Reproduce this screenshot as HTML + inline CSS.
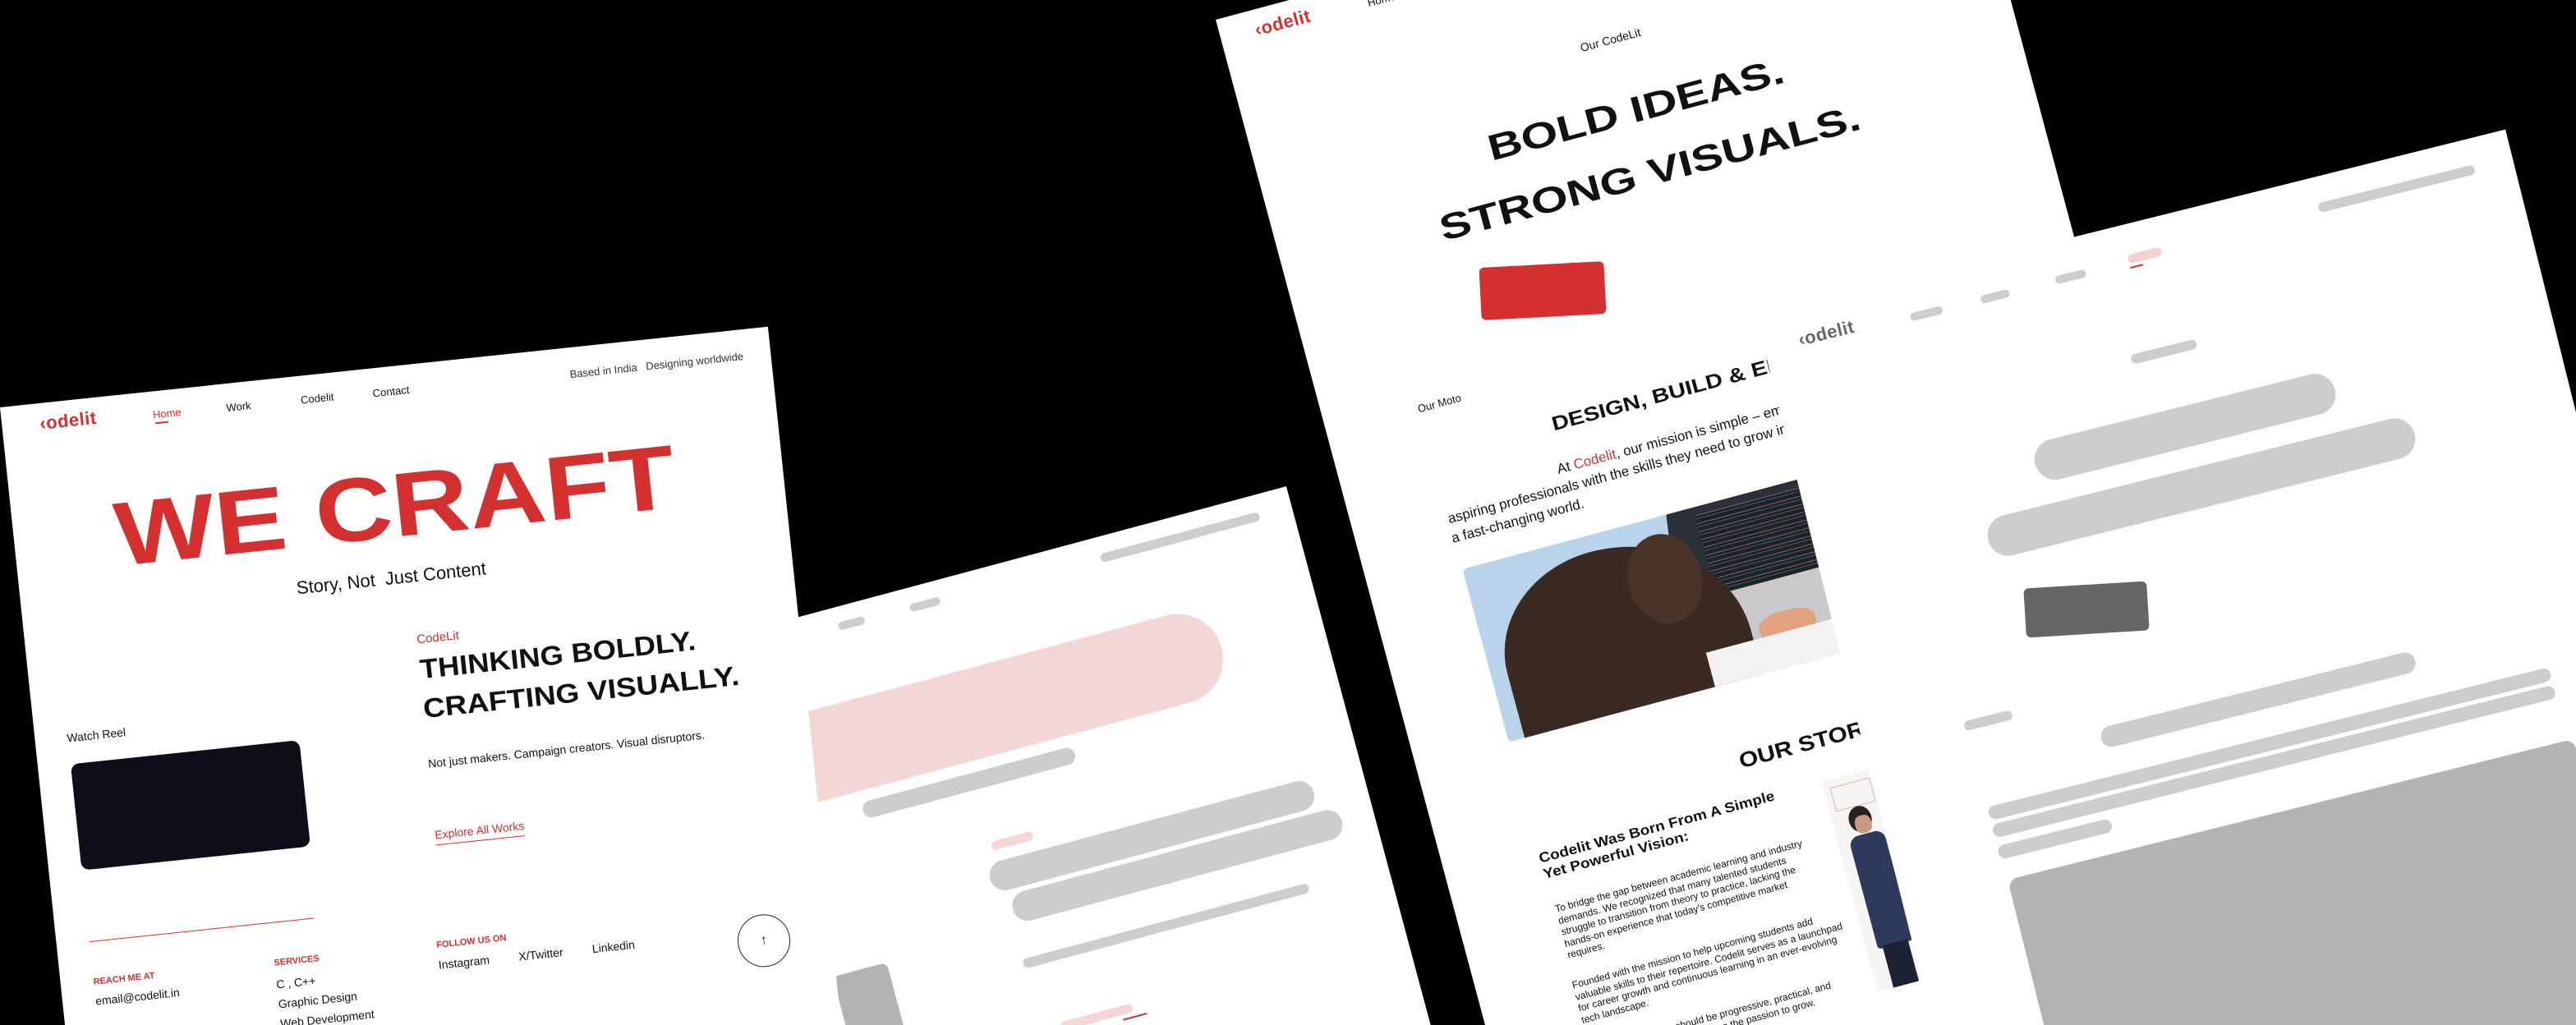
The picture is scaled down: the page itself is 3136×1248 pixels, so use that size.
<!DOCTYPE html>
<html><head><meta charset="utf-8">
<style>
*{margin:0;padding:0;box-sizing:border-box}
html,body{width:3136px;height:1248px;overflow:hidden;background:#000;font-family:"Liberation Sans",sans-serif;color:#111}
#wrap{position:relative;width:3136px;height:1248px;overflow:hidden;background:#000}
.card{position:absolute;background:#fff;transform-origin:0 0;overflow:hidden}
.a{position:absolute;white-space:nowrap;line-height:1}
.sx{display:inline-block;transform-origin:0 50%}
.r{color:#d3302f}
.g{position:absolute;background:#cdcdcd;border-radius:999px}
.logo{font-weight:bold;font-size:22px;color:#d3302f;letter-spacing:0.5px}
</style></head><body><div id="wrap">

<!-- CARD 2 (wireframe middle) -->
<div class="card" style="left:600px;top:851px;width:1000px;height:1600px;transform:rotate(-15deg);z-index:1">
  <div class="g" style="left:759px;top:21px;width:200px;height:11px"></div>
  <div class="g" style="left:429px;top:19px;width:33px;height:10px"></div>
  <div class="g" style="left:519px;top:20px;width:38px;height:10px"></div>
  <div class="a" style="left:0;top:114px;width:873px;height:110px;background:#f5d6d6;border-radius:0 55px 55px 0"></div>
  <div class="g" style="left:400px;top:238px;width:267px;height:21px"></div>
  <div class="a" style="left:540px;top:325px;width:52px;height:11px;background:#f5d6d6;border-radius:6px"></div>
  <div class="g" style="left:528px;top:350px;width:408px;height:37px"></div>
  <div class="g" style="left:545px;top:393px;width:415px;height:37px"></div>
  <div class="g" style="left:540px;top:473px;width:360px;height:12px"></div>
  <div class="a" style="left:312px;top:434px;width:68px;height:300px;background:#b3b3b3;border-radius:8px"></div>
  <div class="a" style="left:565px;top:559px;width:90px;height:11px;background:#f5d6d6;border-radius:6px"></div>
  <div class="a" style="left:640px;top:575px;width:30px;height:2px;background:#d3302f"></div>
</div>

<!-- CARD 1 (left) -->
<div class="card" style="left:0;top:496px;width:940px;height:1600px;transform:rotate(-6deg);z-index:2">
  <div class="a logo" style="left:46px;top:14px">&lsaquo;odelit</div>
  <div class="a r" style="left:184px;top:22px;font-size:13px">Home</div>
  <div class="a" style="left:186px;top:38px;width:16px;height:2px;background:#d3302f"></div>
  <div class="a" style="left:274px;top:23px;font-size:13px">Work</div>
  <div class="a" style="left:365px;top:23px;font-size:13px">Codelit</div>
  <div class="a" style="left:453px;top:24px;font-size:13px">Contact</div>
  <div class="a" style="left:694px;top:26px;font-size:13px;color:#333">Based in India&nbsp;&nbsp; Designing worldwide</div>
  <div class="a r" style="left:123px;top:115px;font-size:110px;font-weight:bold"><span class="sx" style="transform:scaleX(1.18)">WE CRAFT</span></div>
  <div class="a" style="left:336px;top:246px;font-size:22px">Story, Not&nbsp; Just Content</div>
  <div class="a r" style="left:475px;top:327px;font-size:15px">CodeLit</div>
  <div class="a" style="left:475px;top:354px;font-size:33px;font-weight:bold"><span class="sx" style="transform:scaleX(1.1)">THINKING BOLDLY.</span></div>
  <div class="a" style="left:474px;top:402px;font-size:33px;font-weight:bold"><span class="sx" style="transform:scaleX(1.12)">CRAFTING VISUALLY.</span></div>
  <div class="a" style="left:473px;top:479px;font-size:14px">Not just makers. Campaign creators. Visual disruptors.</div>
  <div class="a r" style="left:472px;top:566px;font-size:14px;border-bottom:1px solid #d3302f;padding-bottom:5px">Explore All Works</div>
  <div class="a" style="left:39px;top:402px;font-size:14px">Watch Reel</div>
  <div class="a" style="left:40px;top:441px;width:280px;height:130px;background:#0e0d18;border-radius:10px"></div>
  <div class="a" style="left:40px;top:658px;width:275px;height:1px;background:#d3302f"></div>
  <div class="a r" style="left:40px;top:703px;font-size:11px;font-weight:bold">REACH ME AT</div>
  <div class="a" style="left:40px;top:724px;font-size:14px">email@codelit.in</div>
  <div class="a r" style="left:261px;top:703px;font-size:11px;font-weight:bold">SERVICES</div>
  <div class="a" style="left:261px;top:727px;font-size:14px">C , C++</div>
  <div class="a" style="left:261px;top:751px;font-size:14px">Graphic Design</div>
  <div class="a" style="left:261px;top:775px;font-size:14px">Web Development</div>
  <div class="a r" style="left:460px;top:702px;font-size:11px;font-weight:bold">FOLLOW US ON</div>
  <div class="a" style="left:460px;top:724px;font-size:14px">Instagram</div>
  <div class="a" style="left:558px;top:724px;font-size:14px">X/Twitter</div>
  <div class="a" style="left:648px;top:724px;font-size:14px">Linkedin</div>
  <div class="a" style="left:825px;top:711px;width:64px;height:64px;border:1px solid #222;border-radius:50%;text-align:center;line-height:62px;font-size:16px">&#8593;</div>
</div>

<!-- CARD 3 (middle right) -->
<div class="card" style="left:1480px;top:24px;width:941px;height:1600px;transform:rotate(-15deg);z-index:3">
  <div class="a logo" style="left:43px;top:14px">&lsaquo;odelit</div>
  <div class="a" style="left:184px;top:22px;font-size:13px">Home</div>
  <div class="a" style="left:274px;top:23px;font-size:13px">Work</div>
  <div class="a" style="left:420px;top:141px;font-size:14px">Our CodeLit</div>
  <div class="a" style="left:280px;top:217px;font-size:44px;font-weight:bold"><span class="sx" style="transform:scaleX(1.31)">BOLD IDEAS.</span></div>
  <div class="a" style="left:198px;top:296px;font-size:44px;font-weight:bold"><span class="sx" style="transform:scaleX(1.31)">STRONG VISUALS.</span></div>
  <div class="a" style="left:115px;top:515px;font-size:13px">Our Moto</div>
  <div class="a" style="left:268px;top:571px;font-size:24px;font-weight:bold"><span class="sx" style="transform:scaleX(1.2)">DESIGN, BUILD &amp; ELEVATE</span></div>
  <div class="a" style="left:260px;top:628px;font-size:17px">At <span class="r">Codelit</span>, our mission is simple – empower</div>
  <div class="a" style="left:116px;top:652px;font-size:17px">aspiring professionals with the skills they need to grow in</div>
  <div class="a" style="left:114px;top:676px;font-size:17px">a fast-changing world.</div>
  <div class="a" style="left:117px;top:724px;width:428px;height:218px;overflow:hidden;border-radius:6px;background:#b9d4ea">
    <div class="a" style="left:250px;top:-20px;width:200px;height:150px;background:#2c3038;transform:rotate(8deg)"></div>
    <div class="a" style="left:290px;top:10px;width:130px;height:100px;background:repeating-linear-gradient(0deg,#1e2229 0 5px,#3d6a4a 5px 6px,#1e2229 6px 9px,#8a5a8a 9px 10px)"></div>
    <div class="a" style="left:300px;top:110px;width:140px;height:70px;background:#c9c9cc"></div>
    <div class="a" style="left:20px;top:20px;width:300px;height:260px;background:#3a2a22;border-radius:45% 55% 0 0"></div>
    <div class="a" style="left:190px;top:20px;width:90px;height:110px;background:#4a3328;border-radius:50%"></div>
    <div class="a" style="left:330px;top:150px;width:70px;height:35px;background:#e2a27e;border-radius:40%"></div>
    <div class="a" style="left:260px;top:175px;width:200px;height:60px;background:#f2f2f2"></div>
  </div>
  <div class="a" style="left:382px;top:1024px;font-size:26px;font-weight:bold"><span class="sx" style="transform:scaleX(1.15)">OUR STORY</span></div>
  <div class="a" style="left:472px;top:1087px;width:76px;height:265px;overflow:hidden;background:#f7f4f4">
    <div class="a" style="left:8px;top:10px;width:50px;height:30px;border:1px solid #e8b0b0"></div>
    <div class="a" style="left:20px;top:40px;width:28px;height:32px;background:#2a221e;border-radius:50%"></div>
    <div class="a" style="left:26px;top:52px;width:20px;height:22px;background:#c89a80;border-radius:40%"></div>
    <div class="a" style="left:14px;top:75px;width:44px;height:140px;background:#2d3a5c;border-radius:12px 12px 4px 4px"></div>
    <div class="a" style="left:20px;top:212px;width:32px;height:55px;background:#1c2233"></div>
  </div>
  <div class="a" style="left:116px;top:1080px;font-size:17px;font-weight:bold"><span class="sx" style="transform:scaleX(1.12)">Codelit Was Born From A Simple</span></div>
  <div class="a" style="left:116px;top:1100px;font-size:17px;font-weight:bold"><span class="sx" style="transform:scaleX(1.12)">Yet Powerful Vision:</span></div>
  <div class="a" style="left:119px;top:1146px;font-size:12px;line-height:14.5px;white-space:normal;width:330px">To bridge the gap between academic learning and industry demands. We recognized that many talented students struggle to transition from theory to practice, lacking the hands-on experience that today's competitive market requires.</div>
  <div class="a" style="left:115px;top:1241px;font-size:12px;line-height:14.5px;white-space:normal;width:340px">Founded with the mission to help upcoming students add valuable skills to their repertoire. Codelit serves as a launchpad for career growth and continuous learning in an ever-evolving tech landscape.</div>
  <div class="a" style="left:115px;top:1322px;font-size:12px;line-height:14.5px;white-space:normal;width:340px">We believe learning should be progressive, practical, and accessible to everyone who has the passion to grow.</div>
</div>
<div class="a" style="left:1802px;top:322px;width:152px;height:64px;background:#d3302f;border-radius:6px;transform:rotate(-3deg);z-index:3"></div>

<!-- CARD 4 (far right) -->
<div class="card" style="left:2138px;top:385px;width:940px;height:1600px;transform:rotate(-14deg);z-index:4">
  <div class="a logo" style="left:43px;top:30px;color:#666">&lsaquo;odelit</div>
  <div class="g" style="left:182px;top:42px;width:40px;height:10px"></div>
  <div class="g" style="left:270px;top:42px;width:36px;height:10px"></div>
  <div class="g" style="left:364px;top:41px;width:38px;height:10px"></div>
  <div class="a" style="left:456px;top:37px;width:42px;height:11px;background:#f5d0d0;border-radius:6px"></div>
  <div class="a" style="left:456px;top:52px;width:16px;height:2px;background:#d3302f"></div>
  <div class="g" style="left:696px;top:32px;width:196px;height:12px"></div>
  <div class="g" style="left:430px;top:156px;width:82px;height:12px"></div>
  <div class="g" style="left:286px;top:232px;width:376px;height:50px"></div>
  <div class="g" style="left:208px;top:308px;width:535px;height:50px"></div>
  <div class="g" style="left:125px;top:540px;width:60px;height:12px"></div>
  <div class="g" style="left:283px;top:588px;width:394px;height:26px"></div>
  <div class="g" style="left:128px;top:648px;width:705px;height:17px"></div>
  <div class="g" style="left:128px;top:670px;width:705px;height:17px"></div>
  <div class="g" style="left:128px;top:697px;width:142px;height:17px"></div>
  <div class="a" style="left:131px;top:740px;width:710px;height:700px;background:#b3b3b3;border-radius:12px"></div>
</div>
<div class="a" style="left:2465px;top:712px;width:150px;height:60px;background:#666;border-radius:6px;transform:rotate(-3.5deg);z-index:4"></div>

</div></body></html>
